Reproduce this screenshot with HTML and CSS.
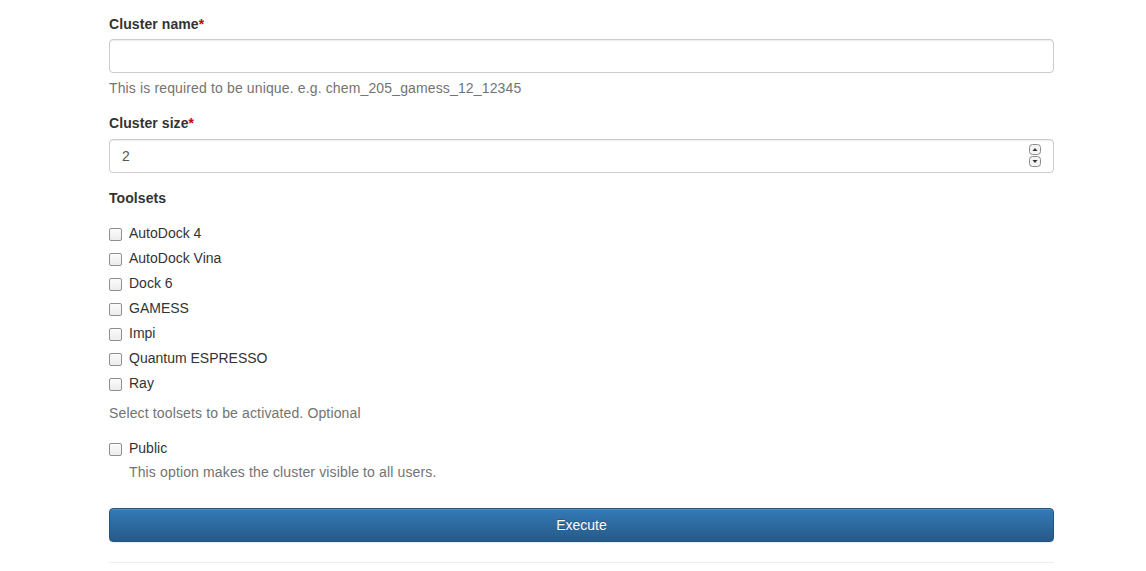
FILE: index.html
```html
<!DOCTYPE html>
<html>
<head>
<meta charset="utf-8">
<link rel="stylesheet" href="styles.css">
</head>
<body>
<div class="page">
  <form class="form">
    <div class="form-group">
      <label class="control-label">Cluster name<span class="req">*</span></label>
      <input class="form-control" type="text">
      <p class="help-block">This is required to be unique. e.g. chem_205_gamess_12_12345</p>
    </div>
    <div class="form-group">
      <label class="control-label size-label">Cluster size<span class="req">*</span></label>
      <div class="num-wrap">
        <input class="form-control num" type="number" value="2">
        <svg class="spinner" width="14" height="26" viewBox="0 0 14 26">
          <rect x="1.5" y="1.5" width="11" height="10" rx="3" fill="#f4f4f4" stroke="#8a8a8a"/>
          <path d="M4.5 8 L7 5 L9.5 8 Z" fill="#333"/>
          <rect x="1.5" y="13.5" width="11" height="10" rx="3" fill="#f4f4f4" stroke="#8a8a8a"/>
          <path d="M4.5 17 L9.5 17 L7 20 Z" fill="#333"/>
        </svg>
      </div>
    </div>
    <div class="form-group">
      <label class="control-label">Toolsets</label>
      <div class="checkbox first"><label><input type="checkbox">AutoDock 4</label></div>
      <div class="checkbox"><label><input type="checkbox">AutoDock Vina</label></div>
      <div class="checkbox"><label><input type="checkbox">Dock 6</label></div>
      <div class="checkbox"><label><input type="checkbox">GAMESS</label></div>
      <div class="checkbox"><label><input type="checkbox">Impi</label></div>
      <div class="checkbox"><label><input type="checkbox">Quantum ESPRESSO</label></div>
      <div class="checkbox"><label><input type="checkbox">Ray</label></div>
      <p class="help-block">Select toolsets to be activated. Optional</p>
    </div>
    <div class="form-group">
      <div class="checkbox single"><label><input type="checkbox">Public</label>
        <p class="help-block">This option makes the cluster visible to all users.</p>
      </div>
    </div>
    <button type="button" class="btn">Execute</button>
  </form>
  <hr class="rule">
</div>
</body>
</html>
```

FILE: styles.css
```css
* { box-sizing: border-box; }
html, body { margin: 0; padding: 0; background: #fff; }
body {
  font-family: "Liberation Sans", Arial, sans-serif;
  font-size: 14px;
  line-height: 20px;
  color: #333;
}
.page {
  width: 945px;
  margin-left: 109px;
  padding-top: 14px;
}
.form { margin: 0; }
.form-group { margin-bottom: 15px; }
.control-label {
  display: block;
  font-weight: bold;
  margin-bottom: 5px;
  color: #333;
  letter-spacing: 0.08px;
}
.control-label.size-label { margin-bottom: 6px; }
.req { color: #c00; }
.form-control {
  display: block;
  width: 100%;
  height: 34px;
  padding: 6px 12px;
  font-family: inherit;
  font-size: 14px;
  line-height: 20px;
  color: #555;
  background: #fff;
  border: 1px solid #ccc;
  border-radius: 4px;
  box-shadow: inset 0 1px 1px rgba(0,0,0,.075);
  margin: 0;
  outline: none;
}
.num { -moz-appearance: textfield; }
.num::-webkit-outer-spin-button,
.num::-webkit-inner-spin-button { -webkit-appearance: none; margin: 0; }
.num-wrap { position: relative; }
.spinner { position: absolute; right: 12px; top: 4px; }
.help-block {
  display: block;
  margin: 5px 0 10px;
  color: #737373;
  letter-spacing: 0.14px;
}
.checkbox {
  margin: 10px 0;
}
.checkbox.first { margin-top: 15px; }
.checkbox + .checkbox { margin-top: -5px; }
.checkbox label {
  display: block;
  padding-left: 20px;
  font-weight: normal;
  position: relative;
}
.checkbox input {
  -webkit-appearance: none;
  appearance: none;
  position: absolute;
  left: 0;
  top: 5px;
  width: 13px;
  height: 13px;
  margin: 0;
  border: 1px solid #8f8f8f;
  border-radius: 2px;
  background: linear-gradient(to bottom, #fbfbfb, #ececec);
}
.checkbox.single .help-block { margin-left: 20px; margin-top: 4px; }
.btn {
  display: block;
  width: 100%;
  height: 34px;
  margin-top: 26px;
  padding: 6px 12px;
  font-family: inherit;
  font-size: 14px;
  line-height: 20px;
  color: #fff;
  background-image: linear-gradient(to bottom, #337ab7 0, #265a88 100%);
  border: 1px solid #245580;
  border-radius: 4px;
  box-shadow: inset 0 1px 0 rgba(255,255,255,.15), 0 1px 1px rgba(0,0,0,.075);
  text-shadow: 0 -1px 0 rgba(0,0,0,.2);
  cursor: pointer;
}
.rule {
  margin: 20px 0 0;
  border: 0;
  border-top: 1px solid #eee;
}
```
